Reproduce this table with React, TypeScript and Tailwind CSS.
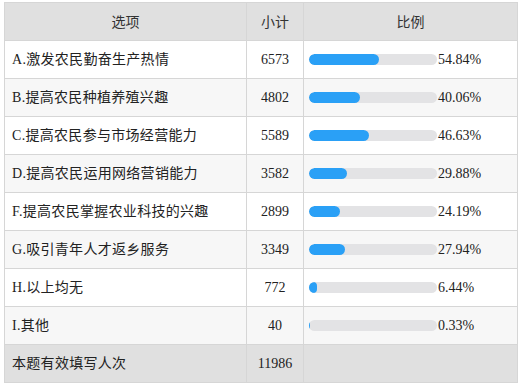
import React from "react";

const rows = [
  { label: "A.激发农民勤奋生产热情", count: 6573, pct: 54.84 },
  { label: "B.提高农民种植养殖兴趣", count: 4802, pct: 40.06 },
  { label: "C.提高农民参与市场经营能力", count: 5589, pct: 46.63 },
  { label: "D.提高农民运用网络营销能力", count: 3582, pct: 29.88 },
  { label: "F.提高农民掌握农业科技的兴趣", count: 2899, pct: 24.19 },
  { label: "G.吸引青年人才返乡服务", count: 3349, pct: 27.94 },
  { label: "H.以上均无", count: 772, pct: 6.44 },
  { label: "I.其他", count: 40, pct: 0.33 },
];

const font = { fontFamily: '"Liberation Serif", "Noto Sans CJK SC", serif' };
const head = { fontFamily: '"Noto Sans CJK SC", sans-serif' };

export default function App() {
  return (
    <div className="w-[520px] h-[389px] bg-white pt-[2px] pl-[4px]">
      <table
        className="border-collapse text-[14px] text-[#222] table-fixed w-[513px]"
        style={font}
      >
        <colgroup>
          <col className="w-[242px]" />
          <col className="w-[57px]" />
          <col className="w-[214px]" />
        </colgroup>
        <thead>
          <tr className="bg-[#e0e0e0] h-[38px]">
            <th className="border border-[#d6d6d6] font-normal text-[#333] text-center" style={head}>选项</th>
            <th className="border border-[#d6d6d6] font-normal text-[#333] text-center" style={head}>小计</th>
            <th className="border border-[#d6d6d6] font-normal text-[#333] text-center" style={head}>比例</th>
          </tr>
        </thead>
        <tbody>
          {rows.map((r, i) => (
            <tr key={r.label} className={`h-[38px] ${i % 2 === 1 ? "bg-[#f7f7f7]" : "bg-white"}`}>
              <td className="border border-[#d6d6d6] pl-[7px] whitespace-nowrap tracking-[0.3px]">{r.label}</td>
              <td className="border border-[#d6d6d6] text-center">{r.count}</td>
              <td className="border border-[#d6d6d6] pl-[5px]">
                <div className="flex items-center">
                  <div className="w-[128px] h-[11px] rounded-full bg-[#e3e3e5] overflow-hidden">
                    <div className="h-full rounded-full bg-[#2aa0f6]" style={{ width: `${r.pct}%` }} />
                  </div>
                  <span className="ml-[1px]">{r.pct.toFixed(2)}%</span>
                </div>
              </td>
            </tr>
          ))}
          <tr className="h-[38px] bg-[#e0e0e0]">
            <td className="border border-[#d6d6d6] pl-[7px] tracking-[0.3px]">本题有效填写人次</td>
            <td className="border border-[#d6d6d6] text-center">11986</td>
            <td className="border border-[#d6d6d6]"></td>
          </tr>
        </tbody>
      </table>
    </div>
  );
}
